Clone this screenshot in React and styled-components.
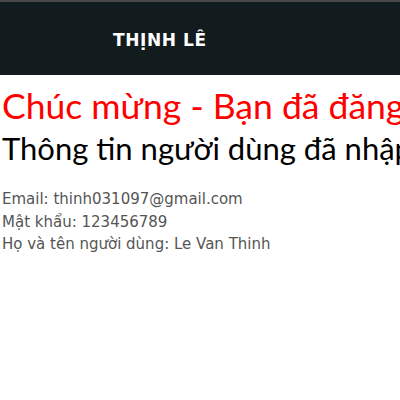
import React from 'react'
import styled, { createGlobalStyle } from 'styled-components'

const GlobalStyle = createGlobalStyle`
    html, body {
        margin: 0;
        padding: 0;
        background: #ffffff;
    }
    body {
        font-family: "DejaVu Sans", Verdana, sans-serif;
        overflow: hidden;
    }
`

const Navbar = styled.nav`
    height: 73px;
    border-top: 2px solid #474747;
    background: #121c1f;
    display: flex;
    align-items: center;
    padding-left: 113px;

    &>.brand {
        color: #ffffff;
        font-family: "DejaVu Sans", Verdana, sans-serif;
        font-weight: 700;
        font-size: 17px;
        letter-spacing: 0.6px;
        white-space: nowrap;
        margin-top: 2px;
    }
`

const Content = styled.main`
    padding: 10px 0 0 2px;
    white-space: nowrap;
`

const Title = styled.h1`
    margin: 0;
    font-family: Lato, "Noto Sans", sans-serif;
    font-weight: 400;
    font-size: ${props => props.$size || 35.5}px;
    line-height: 42px;
    color: ${props => props.$color || '#000000'};
`

const Details = styled.div`
    margin-top: 19px;
    color: #555555;
    font-size: 15px;
    line-height: 22.5px;
`

const App = () => {
  return (
    <>
      <GlobalStyle />
      <Navbar>
        <span className='brand'>THỊNH LÊ</span>
      </Navbar>
      <Content>
        <Title $color='#ff0000'>Chúc mừng - Bạn đã đăng ký thành công</Title>
        <Title $size={31}>Thông tin người dùng đã nhập</Title>
        <Details>
          <div>Email: thinh031097@gmail.com</div>
          <div>Mật khẩu: 123456789</div>
          <div>Họ và tên người dùng: Le Van Thinh</div>
        </Details>
      </Content>
    </>
  )
}

export default App
